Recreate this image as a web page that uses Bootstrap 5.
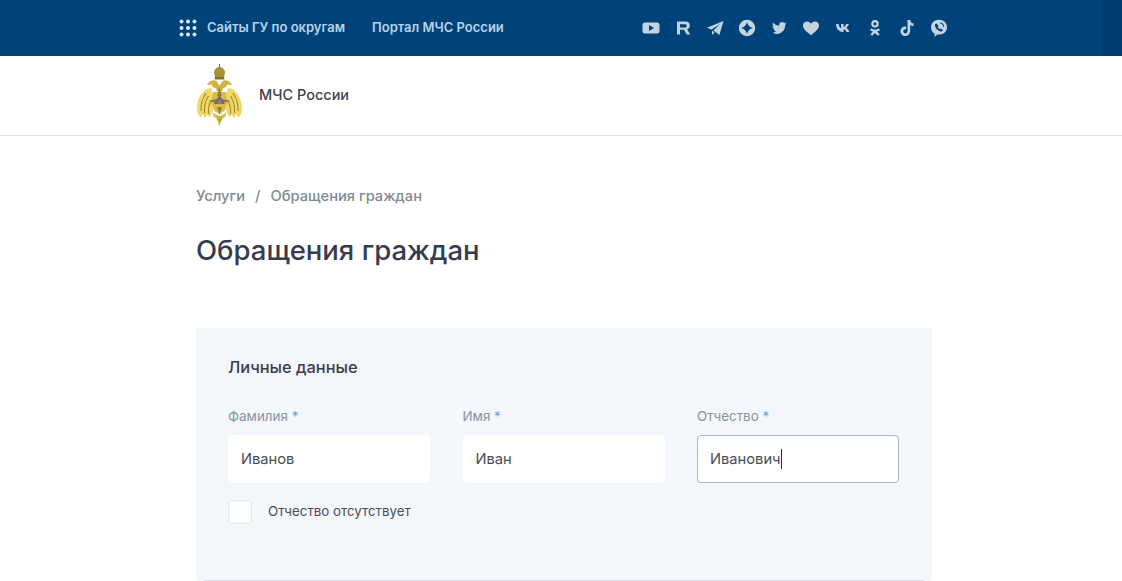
<!DOCTYPE html>
<html lang="ru">
<head>
    <meta charset="UTF-8">
    <meta name="viewport" content="width=device-width, initial-scale=1.0">
    <title>Обращения граждан</title>
    <link href="https://cdn.jsdelivr.net/npm/bootstrap@5.3.1/dist/css/bootstrap.min.css" rel="stylesheet">
    <style>
        body {
            font-family: Inter, "Noto Sans", sans-serif;
            color: #3b3f4f;
            background: #fff;
            overflow: hidden;
        }
        .top-bar {
            height: 56px;
            background: linear-gradient(to right, #00437b 1101px, #003d71 1101px);
            padding-left: 179px;
        }
        .top-link {
            color: #b9d3e8;
            font-size: 13px;
            font-weight: 600;
            text-decoration: none;
        }
        .dots-icon { width: 18px; height: 18px; fill: #dbe8f2; margin-right: 10px; }
        .portal-link { margin-left: 27px; }
        .social-list { margin-left: 138px; gap: 14px; }
        .social-list svg { width: 18px; height: 18px; fill: #c3d3e0; display: block; }
        .site-head {
            height: 80px;
            border-bottom: 1px solid #dfe1e4;
            padding-left: 196px;
        }
        .emblem { width: 47px; height: 62px; margin-top: -1px; }
        .site-name { font-size: 14.5px; font-weight: 500; margin: -2px 0 0 16px; color: #3f4252; }
        .page-wrap { width: 736px; margin-left: 196px; }
        .crumbs {
            margin-top: 49px;
            font-size: 14.7px;
            font-weight: 500;
            color: #7d8a96;
        }
        .crumbs .sep { margin: 0 10px; }
        .page-title {
            font-size: 27.5px;
            font-weight: 500;
            color: #363c4e;
            margin: 25px 0 60px;
            line-height: 36px;
        }
        .form-box {
            background: #f3f6fb;
            border-radius: 4px;
            height: 253px;
            padding: 28px 32px 0;
            position: relative;
        }
        .form-box::after {
            content: "";
            position: absolute;
            left: 8px;
            right: 8px;
            bottom: 0;
            height: 1px;
            background: #d9dce2;
        }
        .box-title { font-size: 16.4px; font-weight: 500; color: #3b3d4d; margin-bottom: 30px; line-height: 22px; }
        .fields { display: grid; grid-template-columns: repeat(3, 202px); column-gap: 32.5px; }
        .field-label { font-size: 13.4px; color: #87939e; margin-bottom: 11px; line-height: 16px; display: block; }
        .field-label span { color: #5fa5d3; }
        .field-input {
            height: 48px;
            border: 1px solid #fff;
            border-radius: 4px;
            padding: 0 12px;
            font-size: 14.7px;
            color: #4a4c58;
            box-shadow: none;
        }
        .field-input.is-active { border-color: #adb5bd; }
        .caret-wrap { position: relative; }
        .text-caret {
            position: absolute;
            left: 84px;
            top: 14px;
            width: 1px;
            height: 20px;
            background: #2b2f3a;
        }
        .no-patronymic { margin-top: 17px; gap: 16px; }
        .form-check .box-check {
            float: none;
            width: 24px;
            height: 24px;
            margin: 0;
            border: 1px solid #e3e6ea;
            border-radius: 4px;
        }
        .check-label { font-size: 13.3px; color: #4a4d5a; }
    </style>
</head>
<body>

    <div class="top-bar d-flex align-items-center">
        <svg class="dots-icon" viewBox="0 0 18 18">
            <circle cx="2.5" cy="2.5" r="2"/><circle cx="9" cy="2.5" r="2"/><circle cx="15.5" cy="2.5" r="2"/>
            <circle cx="2.5" cy="9" r="2"/><circle cx="9" cy="9" r="2"/><circle cx="15.5" cy="9" r="2"/>
            <circle cx="2.5" cy="15.5" r="2"/><circle cx="9" cy="15.5" r="2"/><circle cx="15.5" cy="15.5" r="2"/>
        </svg>
        <a href="#" class="top-link">Сайты ГУ по округам</a>
        <a href="#" class="top-link portal-link">Портал МЧС России</a>
        <div class="social-list d-flex align-items-center">
            <!-- youtube -->
            <svg viewBox="0 0 18 18"><path fill-rule="evenodd" d="M3 3.500h12a2.500 2.500 0 0 1 2.500 2.500v6a2.500 2.500 0 0 1-2.500 2.500H3A2.500 2.500 0 0 1 .5 12V6A2.500 2.500 0 0 1 3 3.500zM7 6v6l5-3z"/></svg>
            <!-- rutube -->
            <svg viewBox="0 0 18 18"><path fill-rule="evenodd" d="M3 2.500h8.500c2.800 0 4.300 1.600 4.300 4.100 0 1.900-1 3.200-2.600 3.700l3 5.200h-3.500l-2.700-4.800H6v4.800H3zM6 5.300v3.200h5c1 0 1.700-.5 1.700-1.600S12 5.300 11 5.300z"/></svg>
            <!-- telegram -->
            <svg viewBox="0 0 18 18"><path d="M17.500 2 .8 8.700l4.700 1.700L14 5 7.400 11.500l6 4.500zM6 11.500V16l2.500-2.600z"/></svg>
            <!-- dzen -->
            <svg viewBox="0 0 18 18"><path fill-rule="evenodd" d="M9 .8a8.200 8.200 0 1 1 0 16.400A8.200 8.200 0 0 1 9 .8zM9 3Q10 8 15 9 10 10 9 15 8 10 3 9 8 8 9 3z"/></svg>
            <!-- twitter -->
            <svg viewBox="0 0 18 18"><path d="M16.500 4.500c-.5.200-1.100.4-1.700.5.600-.4 1.100-1 1.300-1.700-.6.300-1.200.6-1.900.7a3 3 0 0 0-5.100 2.700C6.600 6.600 4.400 5.400 3 3.600c-.8 1.400-.4 3.100.9 4-.5 0-1-.2-1.400-.4 0 1.500 1 2.700 2.400 3-.4.100-.9.100-1.300 0 .4 1.200 1.500 2 2.800 2.100A6 6 0 0 1 2 13.600 8.500 8.500 0 0 0 15.100 6c.6-.4 1-.9 1.400-1.500z"/></svg>
            <!-- heart -->
            <svg viewBox="0 0 18 18"><path d="M9 16.200C4 12.300 1 9.700 1 6.500 1 4 2.900 2.500 5 2.500c1.600 0 3 .8 4 2.200 1-1.400 2.400-2.200 4-2.200 2.100 0 4 1.500 4 4 0 3.200-3 5.800-8 9.700z"/></svg>
            <!-- vk -->
            <svg viewBox="0 0 18 18"><path d="M1 5h2.700c.1 2.500 1.300 4 2.400 4.300V5h2.500v2.900C9.700 7.800 10.900 6.500 11.300 5h2.500c-.4 1.800-1.700 3.200-2.700 3.800 1 .5 2.500 1.800 3.200 4.200h-2.800c-.5-1.500-1.700-2.700-3-2.800V13h-.4C4 13 1.200 10 1 5z" transform="translate(1 0)"/></svg>
            <!-- odnoklassniki -->
            <svg viewBox="0 0 18 18"><path fill-rule="evenodd" d="M9 1a3.800 3.800 0 1 1 0 7.600A3.800 3.800 0 0 1 9 1zm0 2.200a1.600 1.600 0 1 0 0 3.200 1.600 1.600 0 0 0 0-3.200zM5 9.500c2.500 1.500 5.500 1.500 8 0l1 1.800c-.9.600-1.900 1-2.900 1.200l2.500 2.700-1.700 1.500L9 14l-2.900 2.700-1.700-1.500 2.500-2.700c-1-.2-2-.6-2.900-1.200z"/></svg>
            <!-- tiktok -->
            <svg viewBox="0 0 18 18"><path d="M9.500 1h2.700c.2 2 1.400 3.300 3.300 3.500v2.700c-1.200 0-2.300-.4-3.300-1.100v5.600c0 3-2.200 5.300-5 5.300s-4.700-2.200-4.700-4.800c0-3 2.600-5.200 5.600-4.700v2.800c-1.500-.4-2.900.5-2.900 1.900 0 1.200.9 2.100 2 2.100 1.300 0 2.300-1 2.300-2.400z"/></svg>
            <!-- viber -->
            <svg viewBox="0 0 18 18"><path fill-rule="evenodd" d="M9 .8c4.500 0 8 3 8 7.400s-3.500 7.400-8 7.400c-.6 0-1.100 0-1.600-.1L4.600 18v-3.300C2.300 13.400 1 11.100 1 8.200 1 3.800 4.500.8 9 .8zM6.300 4.300 5 5.400c-.3 1.500.7 3.600 2.200 5.100 1.500 1.400 3.300 2.300 4.600 2l1.200-1.300-2-1.600-1 .7c-.9-.4-1.800-1.300-2.200-2.200l.7-1zM10 3.500v1c1.800.1 3.100 1.400 3.200 3.300h1C14.100 5.300 12.400 3.600 10 3.500z"/></svg>
        </div>
    </div>

    <div class="site-head d-flex align-items-center">
        <!-- emblem -->
        <svg class="emblem" viewBox="0 0 47 62">
            <!-- crown -->
            <path d="M23 0h1v3h-1z" fill="#7d6c2c"/>
            <path d="M18 9c0-3.500 2.500-6 5.500-6S29 5.500 29 9l-1 4H19z" fill="#a98f35"/>
            <path d="M19 13h9l.5 2.500h-10z" fill="#7f7134"/>
            <!-- heads -->
            <path d="M11 21c1-3 4.500-5.500 8-4.500 1.500.3 2.500 1.500 3 3l1.500 2 1.500-2c.5-1.500 1.500-2.700 3-3 3.500-1 7 1.500 8 4.500l-4.500-.5-1.500 2.500-3 1.500-1 3h-5l-1-3-3-1.500-1.500-2.500z" fill="#cfb343"/>
            <!-- wings -->
            <path d="M15 24C8 24 1 33 1 45c0 4 1.500 7 3.500 8.500L7 50l1.500 4 3-3.500 2 3 3-6 1.500-8-1-9z" fill="#f0d868"/>
            <path d="M32 24c7 0 14 9 14 21 0 4-1.500 7-3.500 8.500L40 50l-1.500 4-3-3.500-2 3-3-6-1.500-8 1-9z" fill="#f0d868"/>
            <path d="M5 47c-.5-6 1-12 5-18M8.500 49c-.5-6 .5-12 4-17M12.500 50c-.5-5 .5-10 3-14M42 47c.5-6-1-12-5-18M38.500 49c.5-6-.5-12-4-17M34.500 50c.5-5-.5-10-3-14" stroke="#a3862a" stroke-width="1.100" fill="none"/>
            <!-- body and star -->
            <path d="M17 28h13l1.500 11-3 8-5 3-5-3-3-8z" fill="#d9bd4c"/>
            <path d="M23.500 23l2.300 9h-4.600zM23.500 51l2.300-8h-4.600zM12.500 37l8.500-2v4zM34.500 37l-8.500-2v4z" fill="#8f7c3a"/>
            <path d="M23.500 31l5.500 9H18z" fill="#6d6a7c"/>
            <path d="M23.500 35l2.500 4.500h-5z" fill="#c9706a"/>
            <!-- tail -->
            <path d="M16.500 48l4 2.500 3 1.500 3-1.500 4-2.500-1 5-3 1.500-3 7.500-3-7.500-3-1.500z" fill="#e2c858"/>
            <path d="M23.500 52v8M21 52l1.500 5M26 52l-1.500 5" stroke="#a88c30" stroke-width=".8" fill="none"/>
        </svg>
        <div class="site-name">МЧС России</div>
    </div>

    <div class="page-wrap">
        <div class="crumbs">Услуги<span class="sep">/</span>Обращения граждан</div>
        <h1 class="page-title">Обращения граждан</h1>

        <form class="form-box">
            <div class="box-title">Личные данные</div>
            <div class="fields">
                <div>
                    <label class="field-label">Фамилия <span>*</span></label>
                    <input type="text" class="form-control field-input" value="Иванов">
                </div>
                <div>
                    <label class="field-label">Имя <span>*</span></label>
                    <input type="text" class="form-control field-input" value="Иван">
                </div>
                <div>
                    <label class="field-label">Отчество <span>*</span></label>
                    <div class="caret-wrap">
                        <input type="text" class="form-control field-input is-active" value="Иванович">
                        <span class="text-caret"></span>
                    </div>
                </div>
            </div>
            <div class="form-check d-flex align-items-center no-patronymic ps-0">
                <input type="checkbox" class="form-check-input box-check" id="noPatronymic">
                <label class="check-label" for="noPatronymic">Отчество отсутствует</label>
            </div>
        </form>
    </div>

    <script src="https://cdn.jsdelivr.net/npm/bootstrap@5.3.1/dist/js/bootstrap.bundle.min.js"></script>
</body>
</html>
